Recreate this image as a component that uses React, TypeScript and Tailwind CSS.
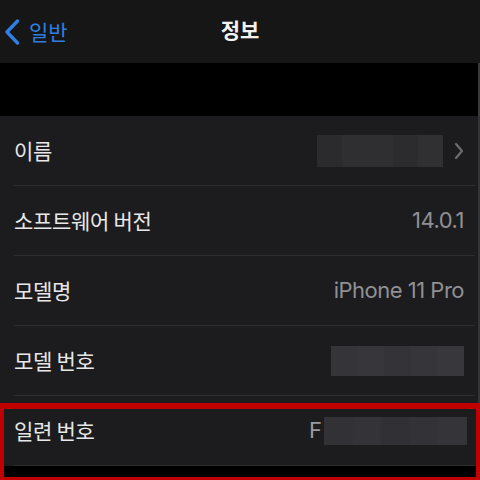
import React from "react";

const KR = { fontFamily: '"Noto Sans CJK KR", "Noto Sans", sans-serif' };
const NUM = { fontFamily: 'Inter, "Noto Sans CJK KR", sans-serif' };

function Mosaic({ w, h, tiles }: { w: number; h: number; tiles: string[] }) {
  return (
    <div className="flex" style={{ width: w, height: h }}>
      {tiles.map((c, i) => (
        <div key={i} className="h-full flex-1" style={{ backgroundColor: c }} />
      ))}
    </div>
  );
}

function Row({ label, children }: { label: string; children?: React.ReactNode }) {
  return (
    <div className="flex flex-col">
      <div className="flex h-[69px] items-center justify-between pl-[14px] pr-[14px]">
        <span className="text-[21px] text-[#e8e8e8] tracking-[-0.3px]" style={KR}>
          {label}
        </span>
        <div className="flex items-center">{children}</div>
      </div>
      <div className="ml-[14px] mr-[3px] h-px bg-[#2e2e31]" />
    </div>
  );
}

export default function App() {
  return (
    <div className="relative h-[480px] w-[480px] overflow-hidden bg-black">
      {/* Nav bar */}
      <div className="relative flex h-[63px] items-center bg-[#161616]">
        <div className="flex items-center pl-[3px]">
          <svg width="18" height="26" viewBox="0 0 18 26" className="mt-[1px]">
            <path d="M14.5 2 L4 13 L14.5 24" fill="none" stroke="#2f7fe2" strokeWidth="3.4" strokeLinecap="round" strokeLinejoin="round" />
          </svg>
          <span className="ml-[8px] text-[21px] text-[#2f7fe2]" style={KR}>
            일반
          </span>
        </div>
        <div className="absolute left-0 right-0 top-[14px] flex justify-center">
          <span className="text-[21px] font-bold text-[#f2f2f2]" style={KR}>
            정보
          </span>
        </div>
      </div>
      {/* Black band */}
      <div className="h-[53px] bg-black border-r-2 border-[#3a3a3c]" />
      {/* List */}
      <div className="bg-[#1c1c1e] border-r-2 border-[#343436]">
        <Row label="이름">
          <Mosaic w={126} h={32} tiles={["#2b2b2e", "#2f2f32", "#2f2f32", "#2c2c2f", "#303033"]} />
          <svg width="12" height="18" viewBox="0 0 12 18" className="ml-[10px] mr-[-1px]">
            <path d="M3 2 L9 9 L3 16" fill="none" stroke="#6b6b70" strokeWidth="2.2" strokeLinecap="round" strokeLinejoin="round" />
          </svg>
        </Row>
        <Row label="소프트웨어 버전">
          <span className="text-[22px] text-[#909095] tracking-[-0.5px]" style={NUM}>
            14.0.1
          </span>
        </Row>
        <Row label="모델명">
          <span className="text-[22px] text-[#909095] tracking-[-0.5px]" style={NUM}>
            iPhone 11 Pro
          </span>
        </Row>
        <Row label="모델 번호">
          <Mosaic w={133} h={30} tiles={["#353438", "#37363a", "#343337", "#363539", "#38373b"]} />
        </Row>
        <Row label="일련 번호">
          <span className="mr-[2px] text-[22px] text-[#9a9a9f]" style={NUM}>
            F
          </span>
          <div className="mr-[-3px]">
            <Mosaic w={143} h={28} tiles={["#323136", "#343338", "#313035", "#333237", "#353439"]} />
          </div>
        </Row>
      </div>
      {/* Red annotation box */}
      <div className="pointer-events-none absolute left-0 right-0 top-[403px] h-[80px] border-x-4 border-t-[6px] border-b-[6px] border-[#c00000]" />
    </div>
  );
}
